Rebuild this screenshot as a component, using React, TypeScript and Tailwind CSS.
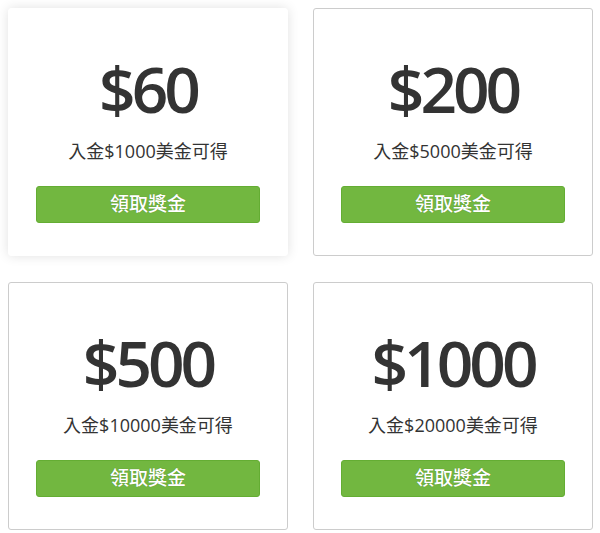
const bonuses = [
    { amount: '$60', deposit: '$1000', active: true },
    { amount: '$200', deposit: '$5000', active: false },
    { amount: '$500', deposit: '$10000', active: false },
    { amount: '$1000', deposit: '$20000', active: false },
];

export default function App() {
    return (
        <div className="w-[600px] h-[533px] bg-white pl-2 pt-2" style={{ fontFamily: '"Open Sans", "Noto Sans CJK TC", sans-serif' }}>
            <div className="grid grid-cols-[280px_280px] gap-x-[25px] gap-y-[26px]">
                {bonuses.map((b) => (
                    <div
                        key={b.amount}
                        className={`h-[248px] rounded-[3px] bg-white border flex flex-col items-center px-[27px] ${b.active
                            ? 'border-white shadow-[0_0_12px_rgba(0,0,0,0.12)]'
                            : 'border-[#cccccc]'
                            }`}
                    >
                        <div className="mt-[40px] h-[80px] flex items-center text-[64px] font-semibold leading-none text-[#333333] tracking-[-4px]">
                            {b.amount}
                        </div>
                        <p className="mt-[10px] text-[18px] leading-[24px] text-[#333333]">
                            入金{b.deposit}美金可得
                        </p>
                        <button className="mt-[23px] w-full h-[37px] rounded-[3px] bg-[#72b740] border border-[#64ad33] text-white text-[19px] font-medium [text-shadow:0_0_1px_rgba(0,0,0,0.3)]">
                            領取獎金
                        </button>
                    </div>
                ))}
            </div>
        </div>
    );
}
